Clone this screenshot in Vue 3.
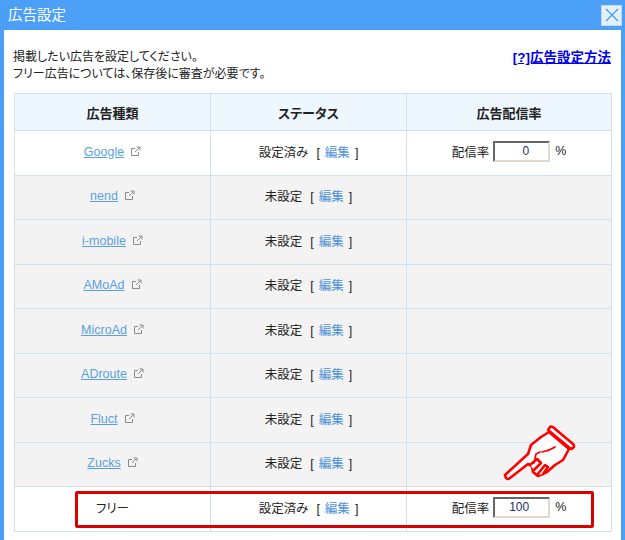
<script setup>
const networks = ['Google', 'nend', 'i-mobile', 'AMoAd', 'MicroAd', 'ADroute', 'Fluct', 'Zucks']
</script>

<template>
  <div class="dialog">
    <header class="titlebar">
      <span class="title">広告設定</span>
      <button class="close" aria-label="閉じる">
        <svg width="16" height="16" viewBox="0 0 16 16"><path d="M2 2 L14 14 M14 2 L2 14" stroke="#4d9de8" stroke-width="1.3" fill="none" /></svg>
      </button>
    </header>
    <main class="body">
      <div class="intro">
        <p>掲載したい広告を設定してください。<br />フリー広告については、保存後に審査が必要です。</p>
        <a class="help" href="#">[?]広告設定方法</a>
      </div>
      <table class="grid">
        <colgroup><col class="c1" /><col class="c2" /><col class="c3" /></colgroup>
        <thead>
          <tr><th>広告種類</th><th>ステータス</th><th>広告配信率</th></tr>
        </thead>
        <tbody>
          <tr v-for="(n, i) in networks" :key="n" :class="{ off: i > 0 }">
            <td>
              <a class="net" href="#">{{ n }}</a>
              <svg class="ext" width="11" height="11" viewBox="0 0 11 11"><path d="M5 2.5H1.5V9.5H8.5V6M5 6L9.5 1.5M6.5 1H10V4.5" stroke="#8a8a8a" fill="none" /></svg>
            </td>
            <td>{{ i === 0 ? '設定済み' : '未設定' }}<span class="br">[</span><a class="edit" href="#">編集</a><span class="br">]</span></td>
            <td>
              <span v-if="i === 0" class="rate">配信率<input class="num" value="0" /><span class="pct">%</span></span>
            </td>
          </tr>
          <tr class="free">
            <td><span>フリー</span></td>
            <td>設定済み<span class="br">[</span><a class="edit" href="#">編集</a><span class="br">]</span></td>
            <td><span class="rate">配信率<input class="num" value="100" /><span class="pct">%</span></span></td>
          </tr>
        </tbody>
      </table>
    </main>
    <div class="redbox"></div>
    <svg class="hand" width="80" height="64" viewBox="0 0 80 64">
      <g fill="#fff" stroke="#f00" stroke-width="2.6" stroke-linejoin="round" stroke-linecap="round">
        <path d="M5 53 L28 32 L31 23 L41 15 L49 10 L69 27 L63 38 L55 43 L47 50 L38 54 L33 50 L32 44 L28 42 L10 56 Q6 59 5 53Z" />
        <path d="M50 5 Q52 4 54 6 L73 22 Q75 24 73 26 L71 27 L48 8Z" />
        <path d="M30 43 L37 37 L41 41 L34 48" />
        <path d="M37 53 L45 43 L48 45 L43 52" />
        <path d="M34 41 L36 32 L40 30 M42 30 Q49 29 55 25" fill="none" stroke-width="1.7" />
      </g>
    </svg>
  </div>
</template>

<style scoped>
.dialog {
  position: relative;
  width: 625px;
  height: 540px;
  overflow: hidden;
  background: #4b9ff7;
  font-family: "Liberation Sans", "Noto Sans CJK JP", sans-serif;
  font-size: 13px;
  font-feature-settings: "palt";
  color: #222;
  box-sizing: border-box;
  padding: 0 4px 0 4px;
  display: flex;
  flex-direction: column;
}
.titlebar {
  height: 30px;
  flex: none;
  display: flex;
  align-items: center;
  justify-content: space-between;
  padding: 0 0 0 4px;
}
.title {
  color: #fff;
  font-size: 14.5px;
  line-height: 29px;
}
.close {
  width: 21px;
  height: 21px;
  margin-right: -1px;
  padding: 0;
  display: flex;
  align-items: center;
  justify-content: center;
  background: #e3f0fd;
  border: 1px solid #c9d9ea;
}
.body {
  flex: 1;
  background: #fff;
  padding: 19px 10px 0;
}
.intro {
  display: flex;
  justify-content: space-between;
  align-items: flex-start;
  height: 44px;
}
.intro p {
  margin: 0 0 0 -1px;
  font-size: 12px;
  line-height: 17px;
}
.help {
  color: #0000ee;
  font-size: 13.5px;
  font-weight: bold;
  text-decoration: underline;
  line-height: 17px;
}
.grid {
  width: 598px;
  border-collapse: collapse;
  table-layout: fixed;
}
.c1, .c2 { width: 196px; }
.grid th, .grid td {
  border: 1px solid #cfe0f2;
  text-align: center;
  padding: 0;
}
.grid th {
  height: 36px;
  background: #eef6fe;
  font-weight: bold;
  color: #222;
}
.grid td {
  height: 40.5px;
  padding-bottom: 3px;
  font-size: 12.5px;
}
.off td { background: #f3f3f3; }
.net {
  color: #5a9fe0;
  text-decoration: underline;
  vertical-align: -1px;
}
.ext { margin-left: 6px; vertical-align: -2px; }
.br { margin: 0 5px 0 8px; }
.br:last-child { margin: 0 0 0 5px; }
.edit { color: #4a90d9; text-decoration: none; }
.rate {
  display: inline-flex;
  align-items: center;
}
.num {
  width: 57px;
  height: 21px;
  box-sizing: border-box;
  margin: 0 0 0 4px;
  padding: 0 19px 0 0;
  text-align: right;
  font: 12px "Liberation Sans", sans-serif;
  color: #1a2f70;
  border-style: solid;
  border-width: 2px;
  border-color: #666 #ddd9d0 #ddd9d0 #666;
  background: #fff;
  outline: none;
}
.pct { margin-left: 5px; }
.redbox {
  position: absolute;
  left: 75px;
  top: 491px;
  width: 519px;
  height: 37px;
  box-sizing: border-box;
  border: 3px solid #d90000;
  border-radius: 2px;
  pointer-events: none;
}
.hand {
  position: absolute;
  left: 500px;
  top: 422px;
}
</style>
